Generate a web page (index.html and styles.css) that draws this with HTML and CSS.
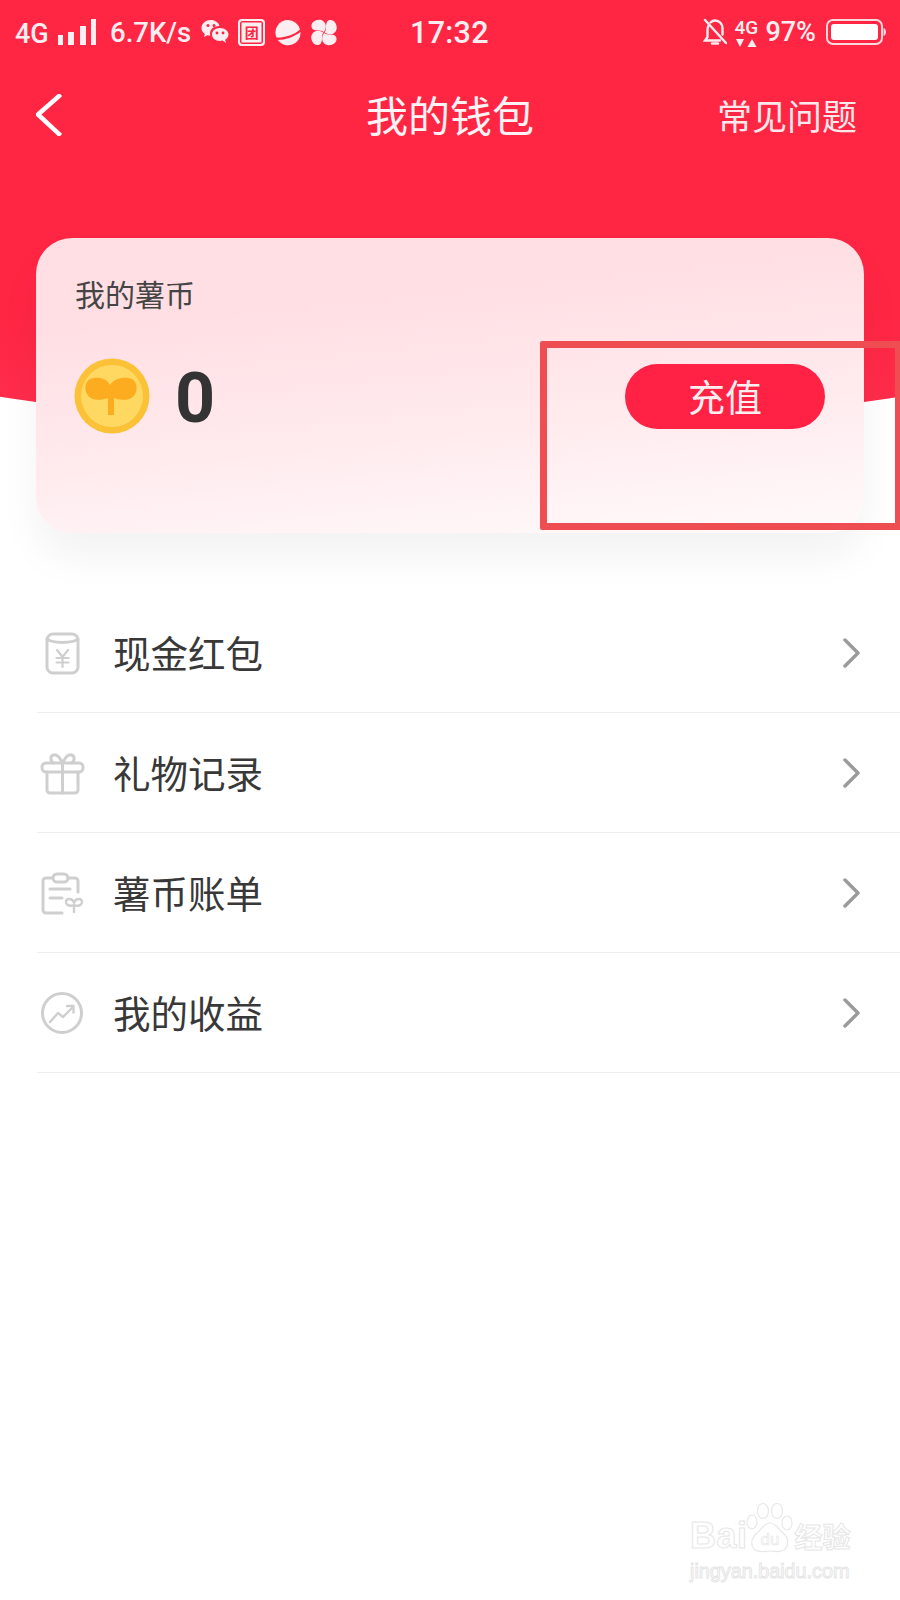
FILE: index.html
```html
<!DOCTYPE html>
<html>
  <head>
    <title>我的钱包</title>
    <link rel="stylesheet" href="styles.css">
  </head>
  <body>
    <div class="page">
      <div class="hero-bg"></div>

      <div class="status-bar">
        <div class="status-left">
          <span class="net">4G</span>
          <svg class="signal" width="38" height="26" viewBox="0 0 38 26" fill="#fbeef0">
            <rect x="0" y="16" width="5" height="10"/>
            <rect x="10" y="13" width="6" height="13"/>
            <rect x="22" y="7" width="6" height="19"/>
            <rect x="33" y="0" width="5" height="26"/>
          </svg>
          <span class="speed">6.7K/s</span>
          <svg class="app-icon icon-wechat" width="28" height="27" viewBox="0 0 28 27" fill="#fbeef0">
            <path d="M10 1C4.800 1 .5 4.500 .5 9c0 2.500 1.300 4.600 3.400 6L3 18l3.400-1.800c1 .3 2 .4 3 .4-.3-.8-.4-1.500-.4-2.300C9 10 13 6.800 18.600 6.900 17.300 3.500 14 1 10 1z"/>
            <path d="M19 9c-4.600 0-8 2.900-8 6.500s3.400 6.500 8 6.500c.9 0 1.800-.1 2.600-.4L25 24l-.9-3.300c2-1.200 3.400-3.100 3.400-5.200C27.500 11.900 23.600 9 19 9z"/>
            <circle cx="7" cy="6.500" r="1.500" fill="#ff2644"/>
            <circle cx="13" cy="6.500" r="1.500" fill="#ff2644"/>
            <circle cx="16" cy="14" r="1.400" fill="#ff2644"/>
            <circle cx="22" cy="14" r="1.400" fill="#ff2644"/>
          </svg>
          <span class="tuan">团</span>
          <svg class="app-icon" width="28" height="27" viewBox="0 0 28 27" fill="#fbeef0">
            <path d="M14 1a12.500 12.500 0 0 1 12 9.500C20 16 10 19 2.500 18.500A12.500 12.500 0 0 1 14 1z"/>
            <path d="M3.800 21C11 21 20 18 26.500 13A12.500 12.500 0 0 1 3.800 21z"/>
          </svg>
          <svg class="app-icon icon-fan" width="28" height="27" viewBox="0 0 28 27" fill="#fbeef0">
            <path id="petal" d="M14 13C11 10 3 13.500 1.500 8 .8 3.500 5.500.3 10 .8 14 1.300 16.300 5 15.800 8 15.500 10 14.700 11.800 14 13z"/>
            <use href="#petal" transform="rotate(90 14 13.500)"/>
            <use href="#petal" transform="rotate(180 14 13.500)"/>
            <use href="#petal" transform="rotate(270 14 13.500)"/>
          </svg>
        </div>
        <span class="time">17:32</span>
        <div class="status-right">
          <svg class="bell" width="24" height="28" viewBox="0 0 24 28" fill="none" stroke="#fbeef0" stroke-width="2.400" stroke-linecap="round">
            <path d="M5.500 7.500C4.800 9 4.500 10 4.500 12v7L2 22.500h15"/>
            <path d="M7.500 4.500C9 3 10 2.500 12 2.500c4.500 0 7.500 3.500 7.500 8v6"/>
            <path d="M9 25.500h6"/>
            <path d="M2 2l21 23"/>
          </svg>
          <div class="net-small">
            <span>4G</span>
            <svg width="24" height="8" viewBox="0 0 24 8" fill="#fbeef0">
              <path d="M2 0h8l-4 8z"/>
              <path d="M18 0l4.500 8h-9z"/>
            </svg>
          </div>
          <span class="battery-text">97%</span>
          <svg class="battery" width="60" height="26" viewBox="0 0 60 26">
            <rect x="1" y="1" width="55" height="24" rx="6" fill="none" stroke="#f9d8de" stroke-width="2"/>
            <rect x="5" y="5" width="47" height="16" rx="3" fill="#fff"/>
            <path d="M57.500 9c1.500.5 2.500 2 2.500 4s-1 3.500-2.500 4z" fill="#f9d8de"/>
          </svg>
        </div>
      </div>

      <div class="nav">
        <svg class="back" width="26" height="42" viewBox="0 0 26 42" fill="none" stroke="#fff" stroke-width="4.500" stroke-linecap="square">
          <path d="M23 2L2 20.500 23 40"/>
        </svg>
        <div class="nav-title">我的钱包</div>
        <div class="nav-link">常见问题</div>
      </div>

      <div class="card">
        <div class="card-label">我的薯币</div>
        <div class="card-row">
          <svg class="coin" width="76" height="76" viewBox="0 0 76 76">
            <circle cx="38" cy="38" r="37.500" fill="#fcc237"/>
            <circle cx="38" cy="38" r="31" fill="#ffd862"/>
            <path d="M37 27C34 20 24 18 17 21 10 25 11 38 20 41c5 2 12 0 15-1v17h6V40c3 1 10 3 15 1 9-3 10-16 3-20-7-3-18-1-22 6z" fill="#fcac1e" transform="translate(-1 0)"/>
          </svg>
          <span class="coin-count">0</span>
          <button class="recharge">充值</button>
        </div>
      </div>

      <ul class="menu">
        <li class="menu-item">
          <svg class="menu-icon" width="46" height="46" viewBox="0 0 46 46" fill="none" stroke="#cfcfcf" stroke-width="3" stroke-linecap="round" stroke-linejoin="round">
            <rect x="8" y="4" width="31" height="39" rx="6"/>
            <path d="M8 9c5 4.500 26 4.500 31 0"/>
            <path d="M18 20l5.500 7 5.500-7M23.500 27v10M17.500 28h12M17.500 32.500h12" stroke-width="2.200"/>
          </svg>
          <span class="menu-text">现金红包</span>
          <svg class="arrow" width="18" height="30" viewBox="0 0 18 30" fill="none" stroke="#9b9b9b" stroke-width="3.500" stroke-linecap="round" stroke-linejoin="round">
            <path d="M3 2l13 13L3 28"/>
          </svg>
        </li>
        <li class="menu-item">
          <svg class="menu-icon" width="46" height="46" viewBox="0 0 46 46" fill="none" stroke="#cfcfcf" stroke-width="3" stroke-linecap="round" stroke-linejoin="round">
            <rect x="3" y="13" width="41" height="9" rx="4"/>
            <path d="M8 22v18a3 3 0 0 0 3 3h25a3 3 0 0 0 3-3V22"/>
            <path d="M23.500 13v30"/>
            <path d="M23.500 13c-3-6-6-9-9-8-4 1.500-3 6 0 8M23.500 13c3-6 6-9 9-8 4 1.500 3 6 0 8"/>
          </svg>
          <span class="menu-text">礼物记录</span>
          <svg class="arrow" width="18" height="30" viewBox="0 0 18 30" fill="none" stroke="#9b9b9b" stroke-width="3.500" stroke-linecap="round" stroke-linejoin="round">
            <path d="M3 2l13 13L3 28"/>
          </svg>
        </li>
        <li class="menu-item">
          <svg class="menu-icon" width="46" height="46" viewBox="0 0 46 46" fill="none" stroke="#cfcfcf" stroke-width="3" stroke-linecap="round" stroke-linejoin="round">
            <path d="M14 8H7a3 3 0 0 0-3 3v29a3 3 0 0 0 3 3h16"/>
            <path d="M29 8h7a3 3 0 0 1 3 3v11"/>
            <rect x="14" y="4" width="15" height="8" rx="4"/>
            <path d="M11 19h20M11 28h12"/>
            <path d="M35 42v-7c-2 1-5 1-7-.5-2-2-1-5.500 2-5.500 2.500 0 4.500 2 5 3.500.5-1.500 2.500-3.500 5-3.500 3 0 4 3.500 2 5.500-2 1.500-5 1.500-7 .5" stroke-width="2.400"/>
          </svg>
          <span class="menu-text">薯币账单</span>
          <svg class="arrow" width="18" height="30" viewBox="0 0 18 30" fill="none" stroke="#9b9b9b" stroke-width="3.500" stroke-linecap="round" stroke-linejoin="round">
            <path d="M3 2l13 13L3 28"/>
          </svg>
        </li>
        <li class="menu-item">
          <svg class="menu-icon" width="46" height="46" viewBox="0 0 46 46" fill="none" stroke="#cfcfcf" stroke-width="3" stroke-linecap="round" stroke-linejoin="round">
            <circle cx="23" cy="23" r="19.500"/>
            <path d="M11 32l8-9 5 4 10-10" stroke-width="2.400"/>
            <path d="M28 16h6.500v6.500" stroke-width="2.400"/>
          </svg>
          <span class="menu-text">我的收益</span>
          <svg class="arrow" width="18" height="30" viewBox="0 0 18 30" fill="none" stroke="#9b9b9b" stroke-width="3.500" stroke-linecap="round" stroke-linejoin="round">
            <path d="M3 2l13 13L3 28"/>
          </svg>
        </li>
      </ul>

      <div class="highlight"></div>

      <div class="watermark">
        <div class="wm-logo">
          <span class="wm-bai">Bai</span>
          <svg class="wm-paw" width="48" height="56" viewBox="0 0 48 56" fill="#fff" stroke="#e8e8e8" stroke-width="1.200">
            <ellipse cx="6" cy="19" rx="5" ry="7"/>
            <ellipse cx="17" cy="8" rx="5.500" ry="7.500"/>
            <ellipse cx="31" cy="8" rx="5.500" ry="7.500"/>
            <ellipse cx="41" cy="20" rx="5" ry="7"/>
            <path d="M24 20c6 0 8 6 13 10 6 5 6 13 1 17-5 3-9 1-14 1s-10 2-15-1c-5-4-4-12 2-17 5-4 7-10 13-10z"/>
            <text x="24" y="42" text-anchor="middle" class="wm-du">du</text>
          </svg>
          <span class="wm-cn">经验</span>
        </div>
        <div class="wm-url">jingyan.baidu.com</div>
      </div>
    </div>
  </body>
</html>
```

FILE: styles.css
```css
* {
  box-sizing: border-box;
}

body {
  margin: 0;
  background: #fff;
  font-family: "Noto Sans CJK SC", "Noto Sans", sans-serif;
}

.page {
  position: relative;
  width: 900px;
  height: 1600px;
  overflow: hidden;
}

/* red header with a curved lower edge, sits behind the card */
.hero-bg {
  position: absolute;
  top: 0;
  left: 0;
  width: 900px;
  height: 440px;
  background: linear-gradient(#ff2644 72%, #ff2f4e);
  clip-path: ellipse(1150px 431px at 50% 0);
}

.status-bar {
  position: relative;
  display: flex;
  align-items: center;
  height: 64px;
  padding: 0 15px;
  color: #fbeef0;
  font-family: Roboto, sans-serif;
  font-weight: 500;
}

.status-left {
  display: flex;
  align-items: center;
  width: 395px;
  height: 27px;
}

.net {
  width: 36px;
  font-size: 27px;
  margin-top: 4px;
  white-space: nowrap;
}

.signal {
  margin-left: 7px;
}

.speed {
  margin-left: 14px;
  font-size: 27.500px;
  margin-top: 1px;
  white-space: nowrap;
}

.app-icon {
  margin-left: 9px;
}

.icon-wechat {
  margin-left: 10px;
}

.icon-fan {
  margin-left: 8px;
}

.tuan {
  display: flex;
  align-items: center;
  justify-content: center;
  width: 27px;
  height: 27px;
  margin-left: 9px;
  border: 2px solid #fbeef0;
  border-radius: 4px;
  background-color: #fbeef0;
  box-shadow: inset 0 0 0 1.500px #ff2644;
  color: #ff2644;
  font-family: "Noto Sans CJK SC", sans-serif;
  font-size: 14px;
  font-weight: 700;
  line-height: 1;
}

.time {
  width: 80px;
  font-size: 30.500px;
  letter-spacing: 0.3px;
  white-space: nowrap;
}

.status-right {
  display: flex;
  flex: 1;
  align-items: center;
  justify-content: flex-end;
}

.net-small {
  display: flex;
  flex-direction: column;
  align-items: center;
  margin-left: 7px;
}

.net-small span {
  font-size: 19px;
  line-height: 19px;
  font-weight: 500;
}

.net-small svg {
  margin-top: 2px;
}

.battery-text {
  margin-left: 7px;
  font-size: 27px;
}

.battery {
  margin-left: 10px;
  margin-right: -1px;
}

.nav {
  position: relative;
  display: grid;
  grid-template-columns: 1fr auto 1fr;
  align-items: center;
  height: 106px;
  padding: 0 43px;
  color: #fff;
}

.back {
  margin-left: -7px;
  margin-top: -4px;
}

.nav-title {
  margin-top: -6px;
  font-size: 42px;
  line-height: 1;
  color: #fdf2f4;
}

.nav-link {
  justify-self: end;
  margin-top: -6px;
  font-size: 35px;
  line-height: 1;
  color: #fce8eb;
}

.card {
  position: relative;
  height: 295px;
  margin: 68px 36px 0;
  padding: 35px 39px 0;
  border-radius: 36px;
  background: linear-gradient(174deg, #ffdfe4 0%, #ffdfe4 25%, #ffeaed 60%, #fffafb 100%);
  box-shadow: 0 24px 40px rgba(0, 0, 0, 0.05);
}

.card-label {
  font-size: 30px;
  line-height: 40px;
  color: #454545;
}

.card-row {
  display: flex;
  align-items: center;
  margin-top: 45px;
}

.coin {
  margin-left: -1px;
}

.coin-count {
  height: 76px;
  margin-left: 25px;
  font-family: Roboto, sans-serif;
  font-size: 70px;
  font-weight: 700;
  line-height: 80px;
  color: #333;
}

.recharge {
  width: 200px;
  height: 65px;
  margin-left: auto;
  border: none;
  border-radius: 33px;
  background-color: #ff2244;
  color: #fdeef0;
  font-family: "Noto Sans CJK SC", sans-serif;
  font-size: 37px;
  line-height: 1;
}

.menu {
  position: relative;
  list-style: none;
  margin: 60px 0 0 37px;
  padding: 0;
}

.menu-item {
  display: flex;
  align-items: center;
  height: 120px;
  border-bottom: 1.500px solid #eeeeee;
}

.menu-icon {
  margin-left: 2px;
}

.menu-text {
  margin-left: 28px;
  margin-top: -1px;
  font-size: 37.500px;
  line-height: 1;
  color: #383838;
}

.arrow {
  margin-left: auto;
  margin-right: 40px;
}

/* annotation box drawn over the screenshot */
.highlight {
  position: absolute;
  top: 341px;
  left: 540px;
  width: 362px;
  height: 189px;
  border: 7px solid #ee4e52;
  border-radius: 2px;
}

.watermark {
  position: absolute;
  top: 1503px;
  left: 690px;
  width: 170px;
  color: #fff;
  -webkit-text-stroke: 1px #e6e6e6;
  font-family: "Liberation Sans", sans-serif;
}

.wm-logo {
  display: flex;
  align-items: flex-end;
  height: 56px;
}

.wm-bai {
  font-size: 36px;
  font-weight: 700;
  line-height: 46px;
  letter-spacing: 0.5px;
}

.wm-paw {
  margin-left: -2px;
}

.wm-du {
  font-family: "Liberation Sans", sans-serif;
  font-size: 17px;
  stroke-width: 0.700px;
}

.wm-cn {
  margin-left: 1px;
  font-family: "Noto Sans CJK SC", sans-serif;
  font-size: 28px;
  font-weight: 700;
  line-height: 46px;
}

.wm-url {
  font-size: 19.800px;
  line-height: 24px;
  white-space: nowrap;
}
```
